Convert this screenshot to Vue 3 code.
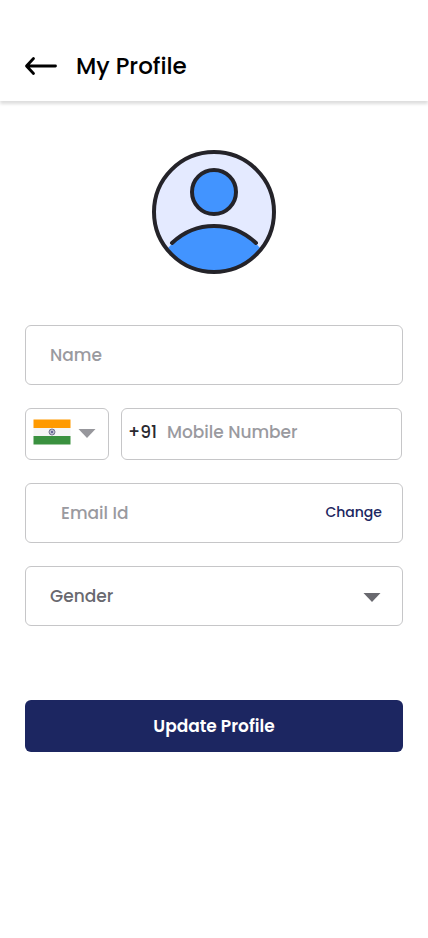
<script setup>
import { ref } from 'vue'

const name = ref('')
const country = ref('IN')
const mobile = ref('')
const email = ref('')
const gender = ref('')
const emailInput = ref(null)
</script>

<template>
  <div class="page">
    <header class="header">
      <button class="back" type="button" aria-label="Back">
        <svg width="34" height="20" viewBox="0 0 34 20" fill="none" stroke="#000" stroke-width="2.800" stroke-linecap="round" stroke-linejoin="round">
          <path d="M31.500 10H3M9.500 2.500L2.500 10L9.500 17.500" />
        </svg>
      </button>
      <h1 class="title">My Profile</h1>
    </header>

    <main class="content">
      <svg class="avatar" width="124" height="124" viewBox="0 0 124 124" aria-hidden="true">
        <circle cx="62" cy="62" r="60" fill="#e4eaff" />
        <path d="M16 98C28 84 44 76 62 76C80 76 96 84 108 98C97 113 81 122 62 122C43 122 27 113 16 98Z" fill="#4294ff" />
        <g fill="none" stroke="#242329" stroke-width="4" stroke-linecap="round">
          <circle cx="62" cy="62" r="60" />
          <path d="M20 93C44 70.300 80 70.300 104 93" />
          <circle cx="62" cy="42" r="22" fill="#4294ff" />
        </g>
      </svg>

      <form class="form" @submit.prevent>
        <input v-model="name" class="box text name" type="text" placeholder="Name" aria-label="Name" />

        <div class="phone-row">
          <label class="box country">
            <svg width="38" height="26" viewBox="0 0 38 26" aria-hidden="true">
              <path fill="#ff9a00" d="M0.500 0.500H37.500V9H0.500Z" />
              <path fill="#f5f5f5" d="M0.500 9H37.500V17H0.500Z" />
              <path fill="#3a913f" d="M0.500 17H37.500V25.500H0.500Z" />
              <circle cx="19" cy="13" r="3" fill="#d4d4e2" stroke="#77778f" stroke-width="1" />
              <path fill="none" stroke="#8a8aaa" stroke-width="0.600" d="M16 13H22M19 10V16M17 11L21 15M21 11L17 15" />
              <circle cx="19" cy="13" r="1" fill="#55558c" />
            </svg>
            <svg width="18" height="12" viewBox="0 0 18 12" aria-hidden="true">
              <path fill="#97979c" d="M0.500 3H17.500L9 12Z" />
            </svg>
            <select v-model="country" class="country-select" aria-label="Country">
              <option value="IN">India</option>
            </select>
          </label>
          <label class="box mobile">
            <span class="code">+91</span>
            <input v-model="mobile" class="text bare" type="tel" placeholder="Mobile Number" aria-label="Mobile Number" />
          </label>
        </div>

        <div class="box email">
          <input ref="emailInput" v-model="email" class="text bare" type="email" placeholder="Email Id" aria-label="Email Id" />
          <button class="change" type="button" @click="emailInput.focus()">Change</button>
        </div>

        <label class="gender">
          <select v-model="gender" class="box text gender-select" aria-label="Gender">
            <option value="" disabled>Gender</option>
            <option>Female</option>
            <option>Male</option>
            <option>Other</option>
          </select>
          <svg class="gender-arrow" width="18" height="12" viewBox="0 0 18 12" aria-hidden="true">
            <path fill="#69696f" d="M0.500 3H17.500L9 12Z" />
          </svg>
        </label>

        <button class="update" type="submit">Update Profile</button>
      </form>
    </main>
  </div>
</template>

<style>
body {
  margin: 0;
  background: #fff;
}
</style>

<style scoped>
.page,
.page * {
  box-sizing: border-box;
}

.page {
  min-height: 100vh;
  background: #fff;
  color: #000;
  font-family: Poppins, Inter, sans-serif;
}

.header {
  display: flex;
  align-items: center;
  gap: 18px;
  padding: 48px 24px 17px;
  box-shadow: 0 3px 3px #dedede;
}

.back {
  display: flex;
  padding: 0;
  border: 0;
  background: none;
}

.title {
  margin: 0;
  font-size: 23px;
  font-weight: 500;
  line-height: 36px;
}

.content {
  display: flex;
  flex-direction: column;
  align-items: center;
  gap: 51px;
  padding: 49px 25px;
}

.form {
  display: flex;
  flex-direction: column;
  gap: 23px;
  width: 100%;
}

.box {
  height: 60px;
  border: 1px solid #c6c6c8;
  border-radius: 6px;
  background: #fff;
}

.text {
  width: 100%;
  color: #2a2930;
  font-family: inherit;
  font-size: 17px;
  font-weight: 500;
}

.text::placeholder {
  color: #9a9a9f;
  opacity: 1;
}

.name {
  padding: 0 24px;
}

.bare {
  flex: 1;
  min-width: 0;
  padding: 0;
  border: 0;
  background: none;
  outline: none;
}

.phone-row {
  display: flex;
  gap: 12px;
  padding-right: 1px;
}

.country {
  position: relative;
  display: flex;
  flex: none;
  align-items: center;
  gap: 7px;
  width: 84px;
  height: 52px;
  padding: 0 7px 4px;
}

.country-select {
  position: absolute;
  inset: 0;
  width: 100%;
  opacity: 0;
}

.mobile {
  display: flex;
  flex: 1;
  align-items: center;
  gap: 10px;
  min-width: 0;
  height: 52px;
  padding: 0 6px 4px;
}

.code {
  color: #2a2930;
  font-size: 17px;
  font-weight: 500;
}

.email {
  display: flex;
  align-items: center;
  gap: 12px;
  padding: 0 20px 0 35px;
}

.change {
  padding: 0 0 2px;
  border: 0;
  background: none;
  color: #1c2661;
  font-family: inherit;
  font-size: 14px;
  font-weight: 500;
}

.gender {
  position: relative;
  display: flex;
  align-items: center;
}

.gender-select {
  padding: 0 48px 0 24px;
  appearance: none;
  color: #69696f;
}

.gender-arrow {
  position: absolute;
  right: 22px;
  pointer-events: none;
}

.update {
  height: 52px;
  margin-top: 51px;
  border: 0;
  border-radius: 6px;
  background: #1c2661;
  color: #fff;
  font-family: inherit;
  font-size: 17px;
  font-weight: 600;
}
</style>
